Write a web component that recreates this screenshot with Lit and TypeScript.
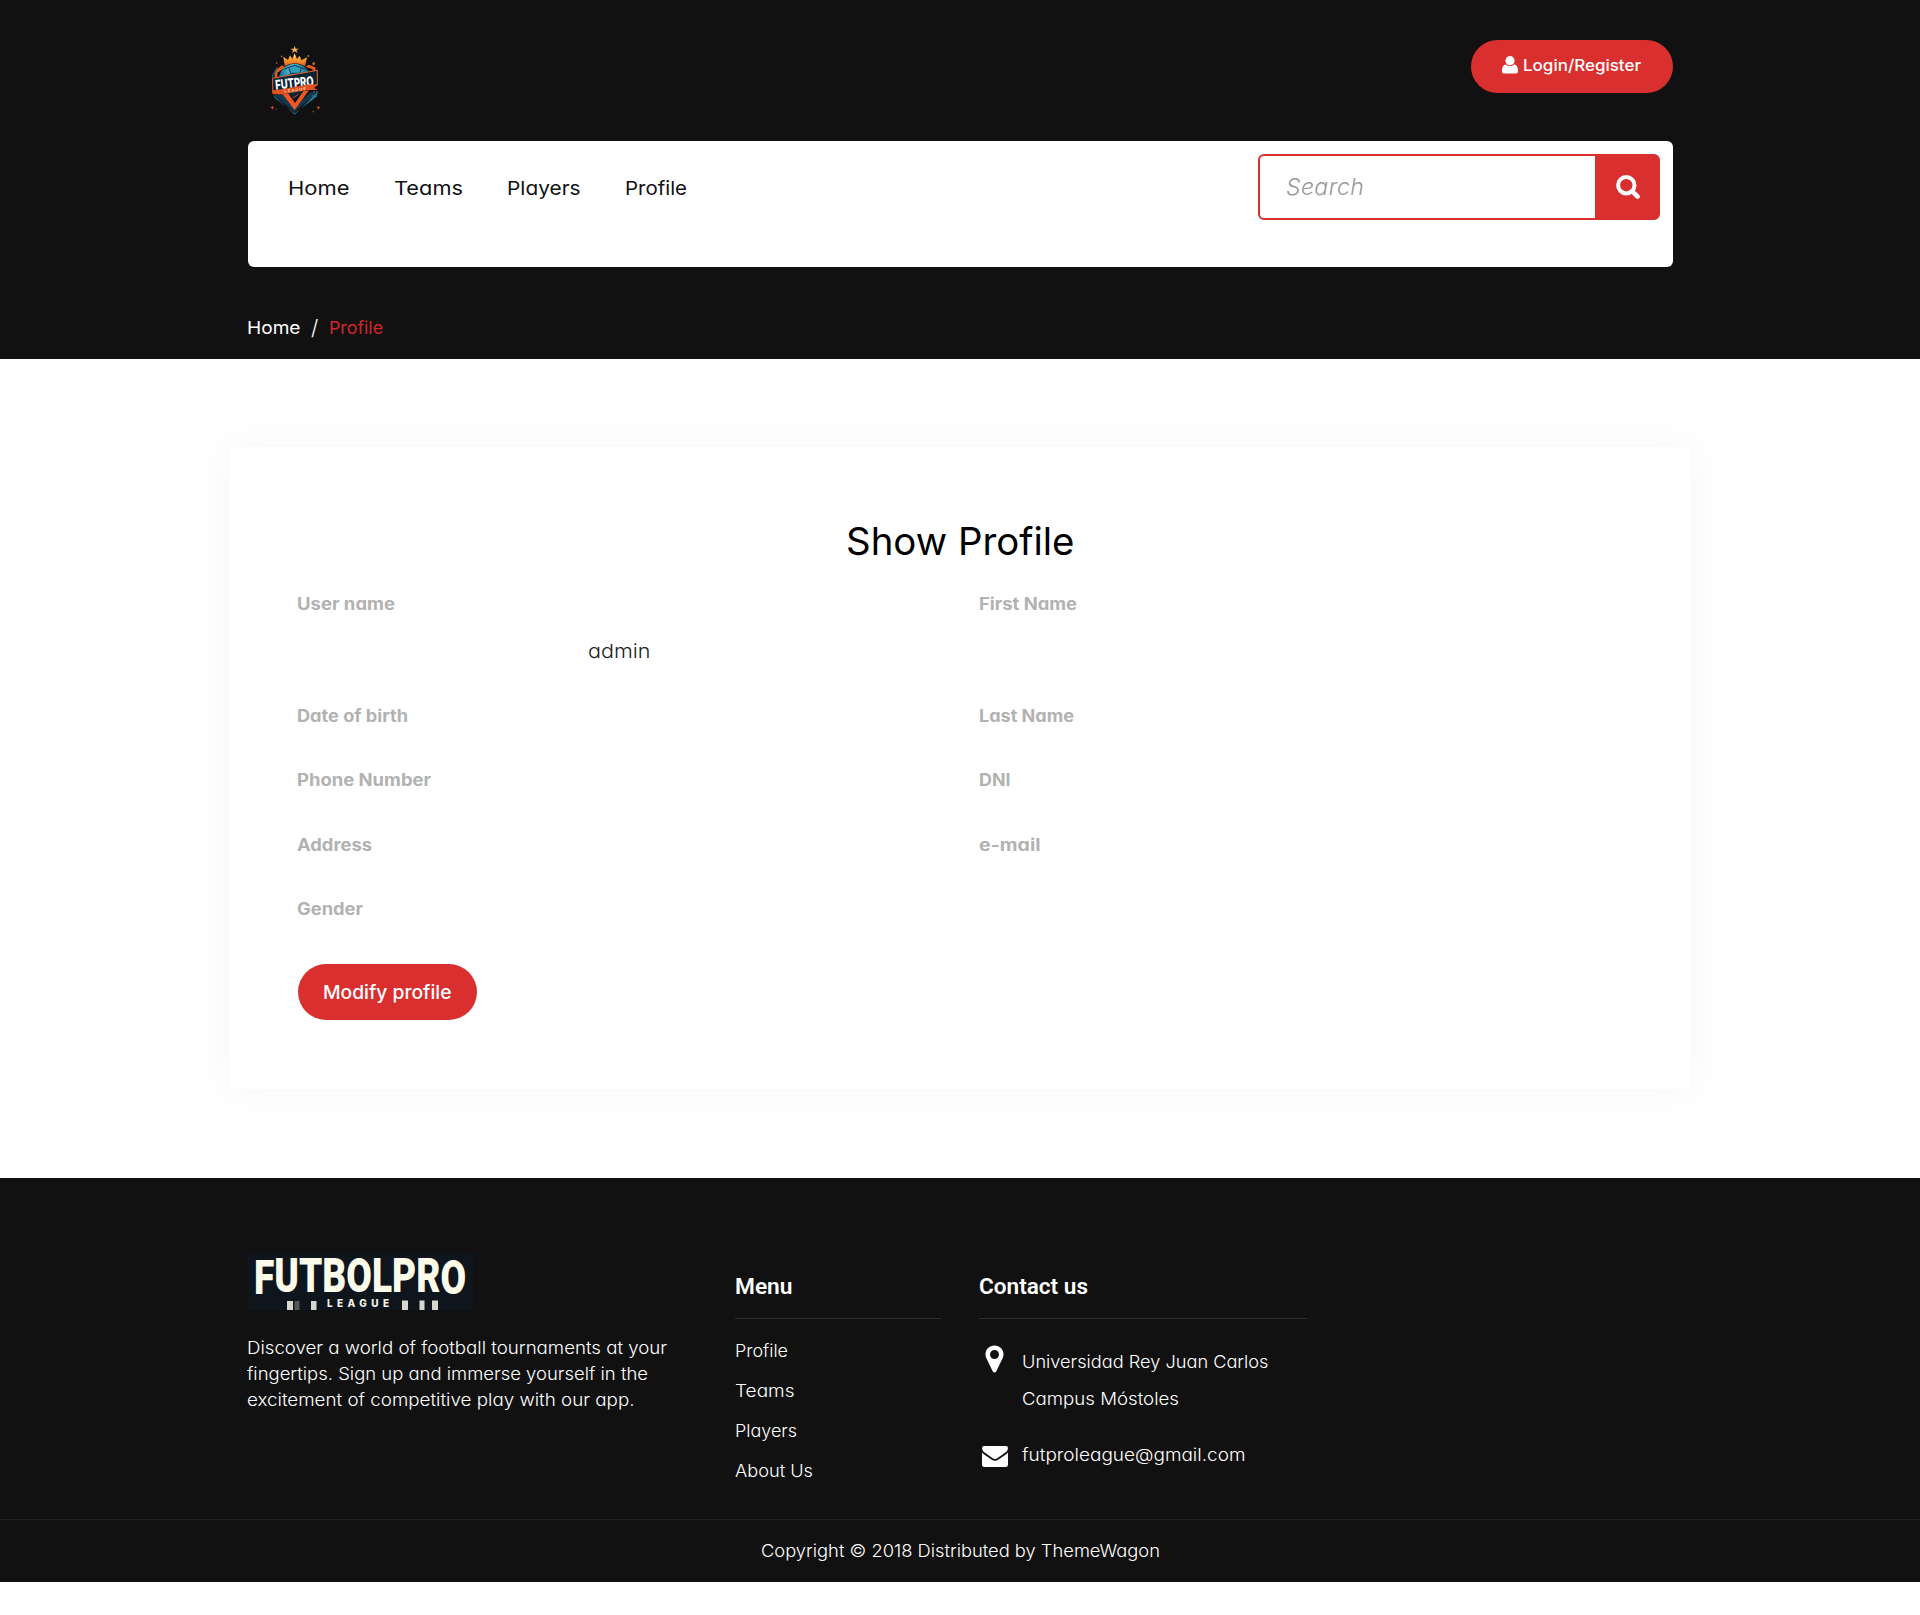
import { LitElement, html, css } from "lit";
import { customElement, property } from "lit/decorators.js";

/** One line of text whose glyphs are widened or narrowed to span a given width. */
@customElement("fitted-text")
class FittedText extends LitElement {
  @property() text = "";
  @property({ type: Number }) span = 0;

  static styles = css`
    :host { display: block; white-space: nowrap; flex: none; }
    .line { display: inline-block; transform-origin: 0 50%; }
  `;

  updated() {
    const line = this.renderRoot.querySelector(".line") as HTMLElement;
    line.style.transform = "none";
    const natural = line.getBoundingClientRect().width;
    line.style.transform = `scaleX(${(this.span / natural).toFixed(4)})`;
    this.style.width = `${this.span}px`;
  }

  render() {
    return html`<span class="line">${this.text}</span>`;
  }
}

const t = (text: string, span: number) => html`<fitted-text .text=${text} .span=${span}></fitted-text>`;

const crest = html`
  <svg class="crest" viewBox="24 0 288 300" role="img" aria-label="FutPro League">
    <defs>
      <linearGradient id="fire" x1="0" y1="0" x2="0" y2="1">
        <stop offset="0" stop-color="#ffd27a" /><stop offset=".5" stop-color="#fb9a2c" /><stop offset="1" stop-color="#e85a1a" />
      </linearGradient>
      <radialGradient id="ball" cx=".45" cy=".2" r=".75">
        <stop offset="0" stop-color="#5fd0e6" /><stop offset=".5" stop-color="#1d7fa3" /><stop offset="1" stop-color="#0b2a3c" />
      </radialGradient>
    </defs>
    <path d="M100 194 L164 254 L234 184 L230 200 L164 250 L104 204Z" fill="#1d6f8e" />
    <path d="M104 196 L163 246 L228 190 L212 186 L164 232 L126 190Z" fill="#14384c" />
    <path d="M104 148 V122 L126 106 L136 112 L112 128 V146Z" fill="#e55a1e" />
    <path d="M226 124 V112 L206 104 L196 110 L218 118 V126Z" fill="#e55a1e" />
    <path d="M98 154 V136 L112 112" fill="none" stroke="#1b5871" stroke-width="4" />
    <circle cx="164" cy="148" r="47" fill="url(#ball)" />
    <path d="M146 112 L164 106 L184 113 L179 130 L152 130Z M152 130 L138 143 M179 130 L190 142 M146 112 L132 118 M184 113 L196 118" fill="#2f9fbd" stroke="#0c3349" stroke-width="3" />
    <path d="M134 108 L130 80 L144 90 L150 76 L157 87 L164 70 L171 87 L179 77 L184 91 L201 82 L195 108 Q164 92 134 108Z" fill="url(#fire)" />
    <path d="M164 47 L167 56 L177 56 L169 61 L173 69 L164 64 L156 69 L159 61 L151 56 L161 56Z" fill="#f5b25a" />
    <path d="M98 145 L232 121 V164 L98 188Z" fill="#0b2334" stroke="#e8612a" stroke-width="3" />
    <g transform="translate(107 179) rotate(-6)">
      <text class="crest-name" textLength="116" lengthAdjust="spacingAndGlyphs">FUTPRO</text>
    </g>
    <path d="M98 181 L125 178 L210 163 L234 164 L222 174 L233 180 L204 180 L126 193 L98 193Z" fill="#e2511f" />
    <g transform="translate(134 188) rotate(-7)">
      <text class="crest-sub" textLength="64">LEAGUE</text>
    </g>
    <path d="M128 193 L164 240 L207 181 L190 184 L165 219 L144 190Z" fill="#f0562a" />
    <path d="M150 192 L181 186 L165 210Z" fill="#0b2334" />
    <path d="M158 204 L176 193" stroke="#b5482a" stroke-width="3" />
    <path d="M220 186 h14 M216 198 h12 M212 208 h8" stroke="#2f9fbd" stroke-width="3" stroke-dasharray="5 3" />
    <g fill="#b9782f">
      <circle cx="125" cy="79" r="2.5" /><circle cx="205" cy="78" r="3" /><circle cx="221" cy="101" r="4" />
      <circle cx="110" cy="99" r="2.5" /><circle cx="108" cy="237" r="1.5" /><circle cx="220" cy="245" r="2" />
    </g>
    <path d="M97 228 v10 M92 233 h10 M235 228 v10 M230 233 h10" stroke="#c9502a" stroke-width="3" />
  </svg>`;

const wordmark = html`
  <svg class="wordmark" viewBox="0 0 225 57" role="img" aria-label="Futbolpro League">
    <rect width="225" height="57" fill="#0e151d" />
    <text class="wm" x="6" y="39" dy="1.500 -1.500 0 0 0 0 0 0 1.500" textLength="212" lengthAdjust="spacingAndGlyphs">FUTBOLPRO</text>
    <text class="wm-sub" x="79" y="54" textLength="62">LEAGUE</text>
    <g fill="#d8d7cd">
      <path d="M39 48h6v9h-6z M63 48h5.500v9H63z M154 47.500h6v9.500h-6z M171.500 47.500h5v9.500h-5z M184 47.500h6v9.500h-6z" />
      <path d="M46.500 48h5v9h-5z" fill="#55575a" />
    </g>
  </svg>`;

const fields: [string, number, string, number][] = [
  ["Date of birth", 111, "Last Name", 95],
  ["Phone Number", 134, "DNI", 31.5],
  ["Address", 75, "e-mail", 61.5],
  ["Gender", 66, "", 0],
];

@customElement("app-root")
class AppRoot extends LitElement {
  static styles = css`
    :host {
      display: block;
      min-height: 1615px;
      background: #fff;
      font-family: Inter, "Open Sans", sans-serif;
      font-feature-settings: "cv11" 1;
      font-size: 18px;
      line-height: 26px;
      color: #222;
    }
    * { box-sizing: border-box; }
    svg { display: block; flex: none; overflow: visible; }
    .wrap { padding: 0 247px 0 248px; }

    .header { height: 359px; background: #111; }
    .top { height: 141px; display: flex; justify-content: space-between; align-items: flex-start; padding-top: 30px; }
    .crest { width: 96px; height: 100px; }
    .crest-name { font: 800 40px Inter, sans-serif; fill: #fff; }
    .crest-sub { font: 700 11px Inter, sans-serif; fill: #ffd9b0; }
    .login {
      margin-top: 10px; width: 202px; height: 53px; border-radius: 27px; background: #d9302f; color: #fff;
      display: flex; align-items: center; gap: 5px; padding: 0 0 3px 31px; font-weight: 500; font-size: 16.500px;
    }
    .login svg { width: 16px; height: 18px; }

    .nav {
      height: 126px; background: #fff; border-radius: 6px;
      display: flex; justify-content: space-between; align-items: flex-start; padding: 13px 13px 0 40px;
    }
    .links { display: grid; grid-template-columns: 105.500px 113.500px 118px auto; padding-top: 22px; font-size: 19px; color: #111; }
    .search { display: flex; width: 402px; height: 66px; border: 2px solid #d9302f; border-radius: 6px; background: #fff; }
    .query {
      flex: 1; min-width: 0; border: 0; outline: 0; background: none; padding: 0 0 0 26px;
      font: italic 300 23px Inter, sans-serif; font-feature-settings: "cv11" 1; letter-spacing: .4px;
    }
    .query::placeholder { color: #999; opacity: 1; }
    .go { width: 63px; background: #d9302f; display: flex; align-items: center; justify-content: center; padding-left: 2px; }
    .go svg { width: 24px; height: 24px; }

    .crumbs { display: grid; grid-template-columns: 64px 18px auto; padding-top: 48px; margin-left: -1px; color: #fff; font-size: 17.500px; }
    .slash { font-weight: 300; font-size: 21px; line-height: 26px; }
    .here { color: #d12525; }

    .card {
      margin: 88px 229px 89px; height: 642px; background: #fff; padding: 68px 68px 0;
      box-shadow: 0 0 36px rgba(0, 0, 0, .045);
    }
    .title { margin: 0; height: 76px; font-weight: 400; font-size: 38.500px; line-height: 52px; color: #000; display: flex; justify-content: center; }
    .row { display: grid; grid-template-columns: 681.500px 1fr; height: 64.300px; align-items: start; }
    .row.first { height: 112px; }
    .label { font-weight: 700; font-size: 17px; color: #b2b2b2; }
    .value { display: flex; justify-content: center; width: 644px; padding-top: 22px; font-size: 19px; font-weight: 300; color: #222; }
    .modify {
      margin: 4px 0 0 .5px; width: 179.500px; height: 56px; border-radius: 28px; background: #d9302f; color: #fff;
      display: flex; align-items: center; justify-content: center; font-weight: 500; font-size: 18.500px;
    }

    .footer { height: 404px; background: #111; color: #fff; font-size: 17.500px; font-weight: 350; }
    .cols { height: 341px; display: grid; grid-template-columns: 487px 206px 328px; }
    .contact { margin-left: 38px; width: 328px; }
    .brand { padding-top: 75px; }
    .wordmark { width: 225px; height: 57px; }
    .wm { font: 900 48px Roboto, sans-serif; fill: #fcfbea; }
    .wm-sub { font: 800 10px Inter, sans-serif; fill: #f2f1e4; }
    .about { display: flex; flex-direction: column; padding-top: 25px; margin-left: -1px; }
    .head {
      margin: 0; padding-top: 94px; height: 141px; border-bottom: 1px solid #2d2d2d;
      font: 600 22.500px/28px Roboto, sans-serif; color: #fff;
    }
    .items { display: flex; flex-direction: column; gap: 14px; padding-top: 19px; }
    .info { display: flex; padding-top: 25px; }
    .info svg { margin-left: 3px; }
    .place { display: flex; flex-direction: column; margin: -1px 0 0 15px; line-height: 37px; }
    .pin { width: 25px; height: 28px; margin-top: 1px; }
    .mail { display: flex; padding-top: 25px; }
    .mail svg { width: 26px; height: 21px; margin: 4px 14px 0 3px; }
    .copy { height: 63px; border-top: 1px solid #1f1f1f; display: flex; justify-content: center; padding-top: 18px; }
  `;

  render() {
    return html`
      <header class="header wrap">
        <div class="top">
          ${crest}
          <a class="login">
            <svg viewBox="0 0 16 18" fill="#fff"><path d="M1.200 17.500 C.3 17 0 16.200 0 14.800 C0 11.200 1.200 8.600 3.900 8.400 C5 9.500 6.400 10.100 8 10.100 C9.600 10.100 11 9.500 12.100 8.400 C14.800 8.600 16 11.200 16 14.800 C16 16.200 15.700 17 14.800 17.500Z" /><circle cx="8" cy="4.700" r="4.600" /></svg>
            ${t("Login/Register", 118)}
          </a>
        </div>
        <nav class="nav">
          <div class="links">
            <a>${t("Home", 61.5)}</a><a>${t("Teams", 69)}</a><a>${t("Players", 73.5)}</a><a>${t("Profile", 62)}</a>
          </div>
          <div class="search">
            <input class="query" placeholder="Search" />
            <span class="go">
              <svg viewBox="0 0 24 24" fill="none" stroke="#fff" stroke-linecap="round"><circle cx="10.300" cy="10.200" r="8.200" stroke-width="4" /><path d="M16.800 16.800 L21.700 21.700" stroke-width="4.500" /></svg>
            </span>
          </div>
        </nav>
        <div class="crumbs"><a>${t("Home", 53.5)}</a><span class="slash">/</span><span class="here">${t("Profile", 54)}</span></div>
      </header>

      <main class="card">
        <h2 class="title">${t("Show Profile", 228.5)}</h2>
        <div class="row first">
          <div><div class="label">${t("User name", 98)}</div><div class="value">${t("admin", 62.5)}</div></div>
          <div class="label">${t("First Name", 98)}</div>
        </div>
        ${fields.map(
          ([a, aw, b, bw]) => html`<div class="row">
            <div class="label">${t(a, aw)}</div>
            ${b ? html`<div class="label">${t(b, bw)}</div>` : ""}
          </div>`
        )}
        <a class="modify">${t("Modify profile", 128.5)}</a>
      </main>

      <footer class="footer">
        <div class="cols wrap">
          <div class="brand">
            ${wordmark}
            <div class="about">
              ${t("Discover a world of football tournaments at your", 420)}
              ${t("fingertips. Sign up and immerse yourself in the", 401)}
              ${t("excitement of competitive play with our app.", 387.5)}
            </div>
          </div>
          <div>
            <h3 class="head">${t("Menu", 57.5)}</h3>
            <div class="items">
              <a>${t("Profile", 53)}</a><a>${t("Teams", 59.5)}</a><a>${t("Players", 62)}</a><a>${t("About Us", 78)}</a>
            </div>
          </div>
          <div class="contact">
            <h3 class="head">${t("Contact us", 109)}</h3>
            <div class="info">
              <svg class="pin" viewBox="0 0 25 28"><path fill="#fff" fill-rule="evenodd" d="M12.500 .5 C17.500 .5 21.500 4.300 21.500 9.300 C21.500 11 21.200 12 20.500 13.500 L14.200 26.500 C13.500 27.900 11.500 27.900 10.800 26.500 L4.500 13.500 C3.800 12 3.500 11 3.500 9.300 C3.500 4.300 7.500 .5 12.500 .5Z M12.500 5 A4.500 4.500 0 1 0 12.500 14 A4.500 4.500 0 1 0 12.500 5Z" /></svg>
              <div class="place">${t("Universidad Rey Juan Carlos", 246.5)}${t("Campus Móstoles", 157)}</div>
            </div>
            <div class="mail">
              <svg viewBox="0 0 26 21" fill="#fff"><path d="M2 0 H24 Q26 0 26 2.300 Q26 4.800 23 6.800 L15.300 12.200 Q13 13.700 10.700 12.200 L3 6.800 Q0 4.800 0 2.300 Q0 0 2 0Z" /><path d="M0 6.600 Q.8 7.500 1.800 8.200 L9.500 13.500 Q13 16 16.500 13.500 L24.200 8.200 Q25.200 7.500 26 6.600 V18.500 Q26 21 23.700 21 H2.300 Q0 21 0 18.500Z" /></svg>
              ${t("futproleague@gmail.com", 223.5)}
            </div>
          </div>
        </div>
        <div class="copy">${t("Copyright © 2018 Distributed by ThemeWagon", 399)}</div>
      </footer>
    `;
  }
}
